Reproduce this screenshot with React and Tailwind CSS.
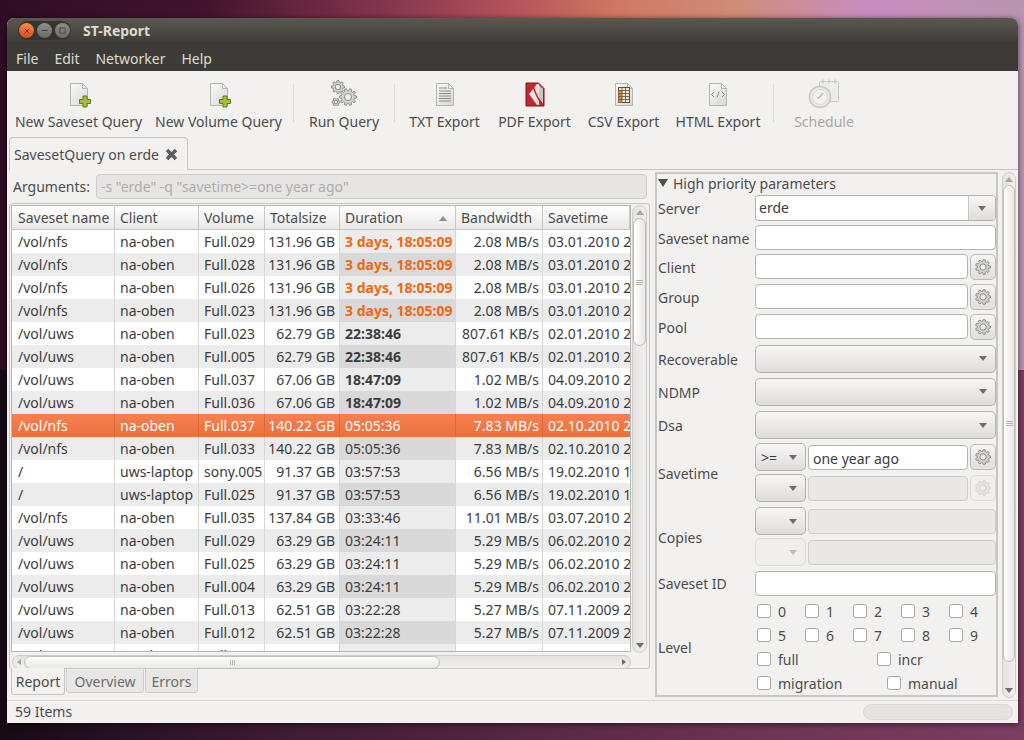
import React from 'react'
import { X, Minus, Square } from 'lucide-react'

const gearPath = (cx, cy, r1, r2, teeth) => {
  let d = ''
  const step = (Math.PI * 2) / teeth
  for (let i = 0; i < teeth; i++) {
    const a = i * step
    const pts = [
      [r2, a - step * 0.32], [r1, a - step * 0.18], [r1, a + step * 0.18], [r2, a + step * 0.32],
    ]
    pts.forEach(([r, t], j) => {
      d += `${i === 0 && j === 0 ? 'M' : 'L'}${(cx + r * Math.cos(t)).toFixed(2)} ${(cy + r * Math.sin(t)).toFixed(2)} `
    })
  }
  return d + 'Z'
}

const Gear = ({ cx, cy, r, teeth = 8 }) => (
  <g>
    <path d={gearPath(cx, cy, r, r * 0.76, teeth)} fill="#d4d3d1" stroke="#8f8e8b" strokeWidth="1" />
    <circle cx={cx} cy={cy} r={r * 0.42} fill="#efeeed" stroke="#8f8e8b" strokeWidth="1" />
  </g>
)

const SmallGear = ({ disabled }) => (
  <svg width="18" height="18" viewBox="0 0 18 18" className={disabled ? 'opacity-30' : ''}>
    <Gear cx={9} cy={9} r={7.5} teeth={9} />
  </svg>
)

const DocBase = ({ id, children }) => (
  <svg width="32" height="32" viewBox="0 0 32 32">
    <defs>
      <linearGradient id={id} x1="0" y1="0" x2="1" y2="1">
        <stop offset="0" stopColor="#fafafa" />
        <stop offset="1" stopColor="#d6d6d5" />
      </linearGradient>
    </defs>
    <path d="M7.5 5.5h12l5 5v17h-17z" fill={`url(#${id})`} stroke="#b5b5b3" />
    <path d="M19.5 5.5v5h5z" fill="#eeeeed" stroke="#b5b5b3" />
    {children}
  </svg>
)

const NewDocIcon = ({ id }) => (
  <DocBase id={id}>
    <path d="M20 18h4v3.5h3.5v4H24V29h-4v-3.5h-3.5v-4H20z" fill="#a3c03c" stroke="#5f7d12" />
  </DocBase>
)

const GearsIcon = () => (
  <svg width="32" height="32" viewBox="0 0 32 32">
    <Gear cx={10} cy={9} r={6.5} />
    <Gear cx={20} cy={19} r={8.5} teeth={10} />
    <Gear cx={8} cy={24} r={4} teeth={6} />
  </svg>
)

const TxtIcon = () => (
  <DocBase id="txtdoc">
    <path d="M10 10h8M10 13h12M10 15.5h12M10 18h12M10 20.5h12M10 23h12" stroke="#8b8b8a" strokeWidth="1" />
  </DocBase>
)

const PdfIcon = () => (
  <svg width="32" height="32" viewBox="0 0 32 32">
    <path d="M7 5h12.5l5.5 5.5V28H7z" fill="#c1272d" stroke="#8c1116" />
    <path d="M18 6L10 16l8 11h2V6z" fill="#f1e6e6" />
    <path d="M20 7v13l4 6V11z" fill="#c9c6c6" />
    <path d="M14 8c2 6 4 12 9 18" fill="none" stroke="#c1272d" strokeWidth="1.5" />
  </svg>
)

const CsvIcon = () => (
  <DocBase id="csvdoc">
    <rect x="10.5" y="9.5" width="11" height="15" fill="#f4e7c8" stroke="#5c5342" />
    <rect x="10.5" y="12" width="3.5" height="12.5" fill="#e08a2e" />
    <path d="M14 9.5v15M17.5 9.5v15M10.5 12.5h11M10.5 15.5h11M10.5 18.5h11M10.5 21.5h11" stroke="#5c5342" strokeWidth="0.8" />
  </DocBase>
)

const HtmlIcon = () => (
  <DocBase id="htmldoc">
    <path d="M12 14l-2.5 2.5L12 19M20 14l2.5 2.5L20 19M17 13.5l-2 6" fill="none" stroke="#8b8b8a" strokeWidth="1" />
  </DocBase>
)

const ScheduleIcon = () => (
  <svg width="32" height="32" viewBox="0 0 32 32" className="opacity-50">
    <rect x="11.5" y="3.5" width="19" height="20" rx="1" fill="#e8e8e7" stroke="#a2a2a0" />
    <path d="M15 1.5v4M21 1.5v4M27 1.5v4" stroke="#a2a2a0" strokeWidth="1.5" />
    <circle cx="12" cy="19" r="10.5" fill="#e4e4e3" stroke="#a2a2a0" strokeWidth="1.5" />
    <circle cx="12" cy="19" r="7.5" fill="#f4f4f3" stroke="#c0c0be" />
    <path d="M12 19l3-4M12 19l-3 1" stroke="#8d8d8b" strokeWidth="1.5" />
  </svg>
)

const tools = [
  { label: 'New Saveset Query', w: 'w-[141px]', icon: <NewDocIcon id="doc1" /> },
  { label: 'New Volume Query', w: 'w-[139px]', icon: <NewDocIcon id="doc2" /> },
  { sep: 'w-[11px]' },
  { label: 'Run Query', w: 'w-[90px]', icon: <GearsIcon /> },
  { sep: 'w-[10px]' },
  { label: 'TXT Export', w: 'w-[91px]', icon: <TxtIcon /> },
  { label: 'PDF Export', w: 'w-[89px]', icon: <PdfIcon /> },
  { label: 'CSV Export', w: 'w-[89px]', icon: <CsvIcon /> },
  { label: 'HTML Export', w: 'w-[100px]', icon: <HtmlIcon /> },
  { sep: 'w-[10px]' },
  { label: 'Schedule', w: 'w-[92px]', icon: <ScheduleIcon />, disabled: true },
]

const nfs1 = ['/vol/nfs', 'na-oben', '', '131.96 GB', '3 days, 18:05:09', '2.08 MB/s', '03.01.2010 2', 'hot']
const uws1 = ['/vol/uws', 'na-oben', '', '62.79 GB', '22:38:46', '807.61 KB/s', '02.01.2010 2', 'bold']
const uws2 = ['/vol/uws', 'na-oben', '', '67.06 GB', '18:47:09', '1.02 MB/s', '04.09.2010 2', 'bold']
const nfs2 = ['/vol/nfs', 'na-oben', '', '140.22 GB', '05:05:36', '7.83 MB/s', '02.10.2010 2']
const lap = ['/', 'uws-laptop', '', '91.37 GB', '03:57:53', '6.56 MB/s', '19.02.2010 1']
const uws3 = ['/vol/uws', 'na-oben', '', '63.29 GB', '03:24:11', '5.29 MB/s', '06.02.2010 2']
const uws4 = ['/vol/uws', 'na-oben', '', '62.51 GB', '03:22:28', '5.27 MB/s', '07.11.2009 2']

const withVol = (row, vol) => row.map((v, i) => (i === 2 ? vol : v))

const rows = [
  withVol(nfs1, 'Full.029'), withVol(nfs1, 'Full.028'), withVol(nfs1, 'Full.026'), withVol(nfs1, 'Full.023'),
  withVol(uws1, 'Full.023'), withVol(uws1, 'Full.005'),
  withVol(uws2, 'Full.037'), withVol(uws2, 'Full.036'),
  withVol(nfs2, 'Full.037'), withVol(nfs2, 'Full.033'),
  withVol(lap, 'sony.005'), withVol(lap, 'Full.025'),
  ['/vol/nfs', 'na-oben', 'Full.035', '137.84 GB', '03:33:46', '11.01 MB/s', '03.07.2010 2'],
  withVol(uws3, 'Full.029'), withVol(uws3, 'Full.025'), withVol(uws3, 'Full.004'),
  withVol(uws4, 'Full.013'), withVol(uws4, 'Full.012'), withVol(uws4, 'Full.011'),
]

const headers = ['Saveset name', 'Client', 'Volume', 'Totalsize', 'Duration', 'Bandwidth', 'Savetime']

const TableRow = ({ row, index }) => {
  const selected = index === 8
  const even = index % 2 === 1
  const rowBg = selected
    ? 'bg-gradient-to-b from-[#f58150] to-[#ec6f3d] text-white'
    : even ? 'bg-[#ececec] text-[#3c3c3c]' : 'bg-white text-[#3c3c3c]'
  const line = selected ? 'border-[#d9693c]' : 'border-[#d8d7d5]'
  let durBg = even ? 'bg-[#d9d9d9]' : 'bg-[#ececec]'
  if (selected) durBg = ''
  let durText = ''
  if (row[7] === 'hot') durText = 'font-bold text-[#f2670f]'
  if (row[7] === 'bold') durText = 'font-bold'
  return (
    <div className={`grid grid-cols-[103px_84px_66px_75px_116px_87px_87px] h-[23px] leading-[23px] shrink-0 ${rowBg}`}>
      <div className={`pl-[6px] border-r ${line}`}>{row[0]}</div>
      <div className={`pl-[5px] border-r ${line}`}>{row[1]}</div>
      <div className={`pl-[5px] border-r ${line}`}>{row[2]}</div>
      <div className={`pr-[4px] text-right border-r ${line}`}>{row[3]}</div>
      <div className={`pl-[5px] border-r ${line} ${durBg} ${durText}`}>{row[4]}</div>
      <div className={`pr-[3px] text-right border-r ${line}`}>{row[5]}</div>
      <div className="pl-[5px] overflow-hidden whitespace-nowrap">{row[6]}</div>
    </div>
  )
}

const Arrow = ({ dir = 'down', className = '' }) => {
  const shape = {
    down: 'border-l-[4px] border-r-[4px] border-t-[5px] border-l-transparent border-r-transparent',
    up: 'border-l-[4px] border-r-[4px] border-b-[5px] border-l-transparent border-r-transparent',
    left: 'border-t-[3px] border-b-[3px] border-r-[4px] border-t-transparent border-b-transparent',
    right: 'border-t-[3px] border-b-[3px] border-l-[4px] border-t-transparent border-b-transparent',
  }[dir]
  return <span className={`block w-0 h-0 ${shape} ${className}`} />
}

const Grip = () => (
  <div className="flex flex-col gap-[1px]">
    <span className="block w-[7px] h-[1px] bg-[#b5b4b2]" />
    <span className="block w-[7px] h-[1px] bg-[#b5b4b2]" />
    <span className="block w-[7px] h-[1px] bg-[#b5b4b2]" />
  </div>
)

const VScroll = ({ className, thumb, end }) => (
  <div className={`flex flex-col items-center rounded-lg border border-[#cfcdca] bg-gradient-to-r from-[#e4e3e1] to-[#f0efee] ${className}`}>
    <div className="h-[12px] flex items-center justify-center shrink-0">
      <Arrow dir="up" className="border-b-[#a5a4a2]" />
    </div>
    <div className={`w-full rounded-full border border-[#bfbdba] bg-gradient-to-r from-white to-[#e8e7e5] flex items-center justify-center shrink-0 ${thumb}`}>
      <Grip />
    </div>
    <div className="flex-1" />
    <div className={`flex items-center justify-center shrink-0 ${end}`}>
      <Arrow dir="down" className="border-t-[#6e6d6b]" />
    </div>
  </div>
)

const TextInput = ({ value = '', disabled, className = 'flex-1' }) => (
  <div className={`h-[25px] rounded-[4px] border border-[#b5b3af] px-[4px] leading-[25px] ${disabled ? 'bg-[#e9e8e7] border-[#d0cecb]' : 'bg-white text-[#3c3c3c]'} ${className}`}>
    {value}
  </div>
)

const GearButton = ({ disabled }) => (
  <div className={`w-[26px] h-[26px] shrink-0 rounded-[5px] border flex items-center justify-center ${disabled ? 'border-[#dcdad7] bg-[#f0efee]' : 'border-[#bdbbb7] bg-gradient-to-b from-[#f7f6f6] to-[#dfdedc]'}`}>
    <SmallGear disabled={disabled} />
  </div>
)

const Combo = ({ value = '', disabled, className = 'w-[51px] h-[28px]' }) => (
  <div className={`rounded-[5px] border flex items-center justify-between pl-[5px] pr-[8px] shrink-0 ${disabled ? 'border-[#dcdad7] bg-[#f0efee]' : 'border-[#b5b3af] bg-gradient-to-b from-[#f8f7f7] to-[#dedddb]'} ${className}`}>
    <span className="text-[#3c3c3c]">{value}</span>
    <Arrow dir="down" className={disabled ? 'border-t-[#bdbcba]' : 'border-t-[#6e6d6b]'} />
  </div>
)

const FormRow = ({ label, flat, className = '', children }) => (
  <div className={`flex items-center ${className}`}>
    <div className={`w-[98px] pl-[1px] shrink-0 whitespace-nowrap ${flat ? '' : 'pt-[2px]'}`}>{label}</div>
    <div className="w-[241px] flex items-center gap-[2px]">{children}</div>
  </div>
)

const Check = ({ label, className = '' }) => (
  <div className={`flex items-center gap-[7px] h-[24px] ${className}`}>
    <span className="block w-[14px] h-[14px] bg-white border border-[#a9a7a3] rounded-[3px] shrink-0" />
    <span>{label}</span>
  </div>
)

const App = () => {
  return (
    <div
      className="w-[1024px] h-[740px] overflow-hidden pl-[7px] pt-[18px] text-[14px] text-[#4c4c4c] [font-family:'Noto_Sans','Liberation_Sans',sans-serif] [background:linear-gradient(90deg,#2e0d24_0%,#43142c_20%,#86364f_38%,#b5525a_50%,#cf7763_60%,#cf8d78_72%,#c88cc0_85%,#b795ad_100%)_top/100%_50%_no-repeat,linear-gradient(90deg,#160a15_0%,#3a1a30_25%,#54283f_50%,#6e3554_75%,#7c3d63_100%)_bottom/100%_50%_no-repeat]"
    >
      <div className="w-[1011px] h-[705px] rounded-t-[7px] overflow-hidden flex flex-col bg-[#f2f1f0] shadow-[0_1px_6px_rgba(0,0,0,0.6)]">
        {/* Title bar */}
        <div className="h-[23px] shrink-0 flex items-center pt-[2px] bg-gradient-to-b from-[#5a5950] to-[#3f3e39]">
          <div className="ml-[11px] w-[53px] h-[19px] rounded-full bg-[#35342f] flex items-center gap-[3px] pl-[1px]">
            <span className="w-[15px] h-[15px] rounded-full bg-gradient-to-b from-[#f58a4b] to-[#dc4a1c] flex items-center justify-center">
              <X size={8} strokeWidth={2.5} color="#5a2410" />
            </span>
            <span className="w-[15px] h-[15px] rounded-full bg-gradient-to-b from-[#8f8e88] to-[#6c6b65] flex items-center justify-center">
              <Minus size={9} strokeWidth={2.5} color="#3c3b37" />
            </span>
            <span className="w-[15px] h-[15px] rounded-full bg-gradient-to-b from-[#8f8e88] to-[#6c6b65] flex items-center justify-center">
              <Square size={7} strokeWidth={2.5} color="#3c3b37" />
            </span>
          </div>
          <div className="ml-[12px] font-bold text-[#dfdbd2]">ST-Report</div>
        </div>

        {/* Menu bar */}
        <div className="h-[30px] shrink-0 flex items-center pl-[9px] pt-[4px] gap-[16px] bg-[#3c3b37] text-[#dfdbd2]">
          <span>File</span>
          <span>Edit</span>
          <span>Networker</span>
          <span>Help</span>
        </div>

        {/* Toolbar */}
        <div className="h-[66px] shrink-0 flex pl-[1px] pt-[7px]">
          {tools.map((t, i) => t.sep ? (
            <div key={i} className={`${t.sep} flex justify-center pt-[6px] h-[44px]`}>
              <span className="block w-[1px] h-full bg-[#dbd9d6]" />
            </div>
          ) : (
            <div key={t.label} className={`${t.w} flex flex-col items-center ${t.disabled ? 'text-[#a9a8a6]' : ''}`}>
              {t.icon}
              <span className="mt-[2px] leading-[20px] whitespace-nowrap">{t.label}</span>
            </div>
          ))}
        </div>

        {/* Document tab */}
        <div className="h-[33px] shrink-0 flex pl-[2px] items-stretch">
          <div className="w-[179px] shrink-0 flex items-center gap-[6px] pl-[4px] border border-b-0 border-[#c8c6c2] rounded-t-[4px] bg-[#f2f1f0]">
            <span className="whitespace-nowrap">SavesetQuery on erde</span>
            <svg width="13" height="13" viewBox="0 0 13 13">
              <path d="M2 2l9 9M11 2l-9 9" stroke="#5f5e5b" strokeWidth="3.6" />
            </svg>
          </div>
          <div className="flex-1 border-b border-[#c8c6c2]" />
        </div>

        {/* Main area */}
        <div className="h-[528px] shrink-0 flex pl-[2px] pr-[2px]">
          <div className="w-[641px] shrink-0 flex flex-col pt-[4px]">
            <div className="flex items-center h-[25px] shrink-0 pl-[4px] pr-[3px]">
              <span className="w-[83px] shrink-0">Arguments:</span>
              <div className="flex-1 h-[25px] rounded-[4px] border border-[#d0cecb] bg-[#e6e5e4] px-[4px] leading-[23px] text-[#adacaa]">
                -s "erde" -q "savetime&gt;=one year ago"
              </div>
            </div>

            <div className="mt-[4px] h-[466px] shrink-0 flex flex-col border border-[#c8c6c2] rounded-[3px] pl-[1px] pt-[1px] pr-[1px]">
              <div className="h-[448px] shrink-0 flex">
                <div className="w-[620px] h-[447px] shrink-0 border border-[#b9b7b3] overflow-hidden flex flex-col bg-white">
                  <div className="grid grid-cols-[103px_84px_66px_75px_116px_87px_87px] h-[24px] shrink-0 leading-[24px] border-b border-[#c8c6c2] bg-gradient-to-b from-white to-[#e9e8e7]">
                    {headers.map((h, i) => (
                      <div key={h} className={`${i === 0 ? 'pl-[6px]' : 'pl-[5px]'} pr-[8px] border-r border-[#c8c6c2] flex items-center justify-between whitespace-nowrap`}>
                        <span>{h}</span>
                        {h === 'Duration' && <Arrow dir="up" className="border-b-[#8f8e8b]" />}
                      </div>
                    ))}
                  </div>
                  {rows.map((row, i) => (
                    <TableRow key={i} row={row} index={i} />
                  ))}
                </div>
                <VScroll className="w-[15px] ml-[1px] h-[448px]" thumb="h-[128px]" end="h-[14px]" />
              </div>
              {/* Horizontal scrollbar */}
              <div className="mt-[2px] ml-[1px] mr-[17px] h-[14px] flex items-center rounded-lg border border-[#cfcdca] bg-gradient-to-b from-[#e4e3e1] to-[#f0efee]">
                <div className="w-[11px] flex justify-center shrink-0"><Arrow dir="left" className="border-r-[#a5a4a2]" /></div>
                <div className="w-[416px] h-[13px] shrink-0 rounded-full border border-[#bfbdba] bg-gradient-to-b from-white to-[#e8e7e5] flex justify-center items-center">
                  <div className="flex gap-[1px]">
                    <span className="w-[1px] h-[5px] bg-[#b5b4b2]" />
                    <span className="w-[1px] h-[5px] bg-[#b5b4b2]" />
                    <span className="w-[1px] h-[5px] bg-[#b5b4b2]" />
                  </div>
                </div>
                <div className="flex-1" />
                <div className="w-[12px] flex justify-center shrink-0"><Arrow dir="right" className="border-l-[#6e6d6b]" /></div>
              </div>
            </div>

            {/* Bottom tabs */}
            <div className="flex pl-[2px] gap-[1px] h-[27px] shrink-0 -mt-[1px]">
              <div className="w-[54px] h-[27px] pt-[1px] flex items-center justify-center bg-[#f2f1f0] border border-t-0 border-[#c8c6c2] rounded-b-[3px]">Report</div>
              <div className="w-[78px] h-[25px] pt-[1px] flex items-center justify-center bg-[#e8e7e5] border border-[#d0cecb] rounded-b-[3px] text-[#6e6d6b]">Overview</div>
              <div className="w-[53px] h-[25px] pt-[1px] flex items-center justify-center bg-[#e8e7e5] border border-[#d0cecb] rounded-b-[3px] text-[#6e6d6b]">Errors</div>
            </div>
          </div>

          {/* Splitter + parameter panel */}
          <div className="w-[5px] shrink-0" />
          <div className="w-[343px] shrink-0 mt-[2px] h-[525px] border-2 border-[#c9c7c3] flex flex-col">
            <div className="h-[18px] mb-[3px] shrink-0 flex items-center gap-[5px] pl-[1px]">
              <span className="block w-0 h-0 border-l-[5px] border-r-[5px] border-t-[8px] border-l-transparent border-r-transparent border-t-[#4c4c4c]" />
              <span>High priority parameters</span>
            </div>
            <FormRow label="Server" flat className="h-[27px]">
              <div className="flex-1 h-[26px] flex rounded-[4px] border border-[#b5b3af] bg-white text-[#3c3c3c]">
                <span className="flex-1 px-[3px] leading-[24px]">erde</span>
                <div className="w-[27px] flex items-center justify-center rounded-r-[4px] border-l border-[#c8c6c2] bg-gradient-to-b from-[#f8f7f7] to-[#dedddb]">
                  <Arrow dir="down" className="border-t-[#6e6d6b]" />
                </div>
              </div>
            </FormRow>
            <FormRow label="Saveset name" className="mt-[4px] h-[25px]"><TextInput /></FormRow>
            <FormRow label="Client" className="mt-[4px] h-[25px]"><TextInput /><GearButton /></FormRow>
            <FormRow label="Group" className="mt-[5px] h-[25px]"><TextInput /><GearButton /></FormRow>
            <FormRow label="Pool" className="mt-[5px] h-[25px]"><TextInput /><GearButton /></FormRow>
            <FormRow label="Recoverable" className="mt-[6px] h-[27px]"><Combo className="w-full h-[28px]" /></FormRow>
            <FormRow label="NDMP" className="mt-[6px] h-[27px]"><Combo className="w-full h-[28px]" /></FormRow>
            <FormRow label="Dsa" flat className="mt-[6px] h-[28px]"><Combo className="w-full h-[28px]" /></FormRow>
            <div className="mt-[4px] flex items-center">
              <div className="w-[98px] pl-[1px] pt-[2px] shrink-0">Savetime</div>
              <div className="w-[241px] flex flex-col gap-[3px]">
                <div className="flex items-center gap-[2px]"><Combo value=">=" /><TextInput value="one year ago" /><GearButton /></div>
                <div className="flex items-center gap-[2px]"><Combo /><TextInput disabled /><GearButton disabled /></div>
              </div>
            </div>
            <div className="mt-[5px] flex items-center">
              <div className="w-[98px] pl-[1px] pt-[2px] shrink-0">Copies</div>
              <div className="w-[241px] flex flex-col gap-[3px]">
                <div className="flex items-center gap-[2px]"><Combo /><TextInput disabled /></div>
                <div className="flex items-center gap-[2px]"><Combo disabled /><TextInput disabled /></div>
              </div>
            </div>
            <FormRow label="Saveset ID" flat className="mt-[5px] h-[25px]"><TextInput /></FormRow>
            <div className="mt-[3px] flex items-center">
              <div className="w-[100px] pl-[1px] shrink-0">Level</div>
              <div className="flex-1">
                <div className="grid grid-cols-[48px_48px_48px_48px_48px]">
                  {['0', '1', '2', '3', '4', '5', '6', '7', '8', '9'].map((n) => <Check key={n} label={n} />)}
                </div>
                <div className="flex"><Check label="full" className="w-[120px]" /><Check label="incr" /></div>
                <div className="flex"><Check label="migration" className="w-[130px]" /><Check label="manual" /></div>
              </div>
            </div>
          </div>
          <VScroll className="w-[15px] ml-[4px] mt-[2px] h-[526px]" thumb="h-[477px]" end="h-[14px]" />
        </div>

        {/* Status bar */}
        <div className="flex-1 flex items-center justify-between pl-[8px] pr-[5px] pb-[1px] border-t border-[#dbd9d6] mt-[2px]">
          <span className="-mt-[1px]">59 Items</span>
          <div className="w-[150px] h-[16px] rounded-lg bg-[#e4e3e2] border border-[#dcdad8]" />
        </div>
      </div>
    </div>
  )
}

export default App
